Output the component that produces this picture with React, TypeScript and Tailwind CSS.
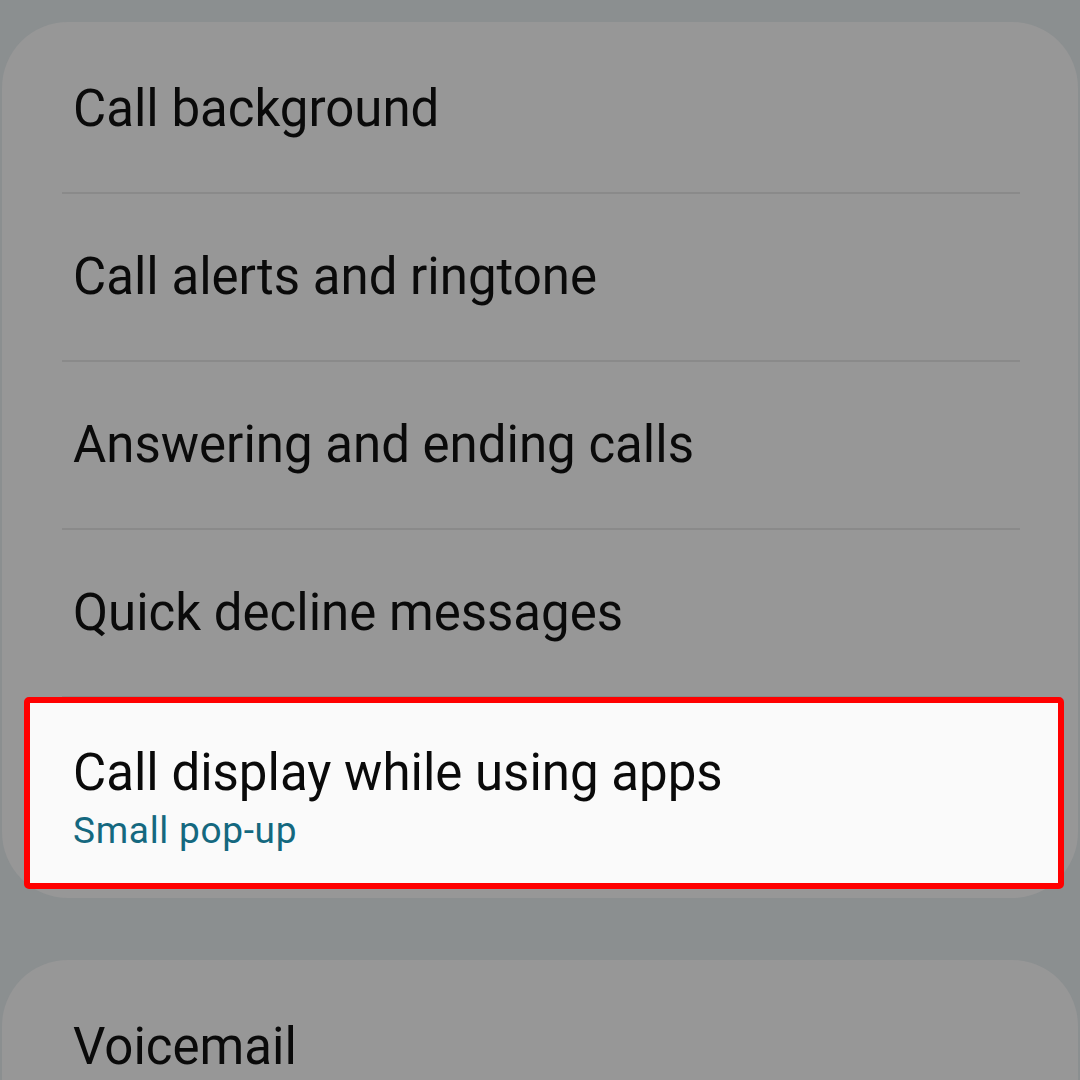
const rows = [
  'Call background',
  'Call alerts and ringtone',
  'Answering and ending calls',
  'Quick decline messages',
];

export default function App() {
  return (
    <div
      className="h-[1080px] w-[1080px] overflow-hidden bg-[#8b8f90] px-[2px] pt-[22px]"
      style={{ fontFamily: 'Roboto, "Noto Sans", sans-serif' }}
    >
      <div className="rounded-[66px] bg-[#979797] pb-[9px] pt-[4px]">
        {rows.map((label) => (
          <div key={label}>
            <div className="flex h-[166px] items-center pl-[71px] text-[51px] text-[#0a0a0a]">
              {label}
            </div>
            <div className="ml-[60px] mr-[58px] h-[2px] bg-[#8a8a8a]" />
          </div>
        ))}
        <div className="-mt-[1px] ml-[22px] mr-[14px] h-[192px] rounded-[5px] border-[6px] border-[#ff0000] bg-[#fafafa] pl-[43px] pt-[40px]">
          <div className="text-[51px] leading-[60px] text-[#0a0a0a]">Call display while using apps</div>
          <div className="mt-[6px] text-[37px] leading-[44px] tracking-[0.7px] text-[#14687f]">Small pop-up</div>
        </div>
      </div>
      <div className="mt-[62px] h-[200px] rounded-[66px] bg-[#979797] pl-[71px] pt-[57px] text-[51px] leading-[60px] text-[#0a0a0a]">
        Voicemail
      </div>
    </div>
  );
}
